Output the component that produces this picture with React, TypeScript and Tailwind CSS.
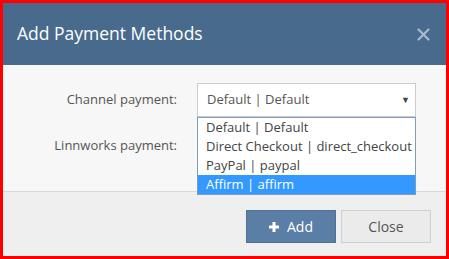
import React from 'react';

const options = [
  { label: 'Default | Default', active: false },
  { label: 'Direct Checkout | direct_checkout', active: false },
  { label: 'PayPal | paypal', active: false },
  { label: 'Affirm | affirm', active: true },
];

const App: React.FC = () => {
  return (
    <div
      className="relative w-[449px] h-[259px] border-[3px] border-[#f00] bg-[#f7f7f7] flex flex-col overflow-hidden"
      style={{ fontFamily: '"Open Sans", "Noto Sans", sans-serif' }}
    >
      {/* Header */}
      <div className="h-[62px] shrink-0 bg-[#476a8d] flex items-center justify-between pl-[14px] pr-[16px]">
        <h1 className="text-[17.5px] text-white leading-none">Add Payment Methods</h1>
        <svg width="13" height="13" viewBox="0 0 13 13" className="text-[#a9bbcd]">
          <path d="M1.5 1.5 L11.5 11.5 M11.5 1.5 L1.5 11.5" stroke="currentColor" strokeWidth="2.2" strokeLinecap="round" />
        </svg>
      </div>

      {/* Body */}
      <div className="h-[126px] shrink-0 bg-[#f7f7f7] pt-[18px] flex flex-col gap-[19px]">
        <div className="flex items-center">
          <label className="w-[174px] text-right text-[13px] text-[#555]">Channel payment:</label>
          <div className="ml-[20px] w-[219px] h-[34px] border border-[#ccc] bg-white flex items-center justify-between pl-[9px] pr-[5px]">
            <span className="text-[13px] text-[#555]">Default | Default</span>
            <span className="text-[9px] text-[#444]">▼</span>
          </div>
        </div>
        <div className="flex items-center">
          <label className="w-[174px] text-right text-[13px] text-[#555]">Linnworks payment:</label>
        </div>
      </div>

      {/* Footer */}
      <div className="flex-1 bg-[#efefef] border-t border-[#d9d9d9] flex items-start justify-end gap-[5px] pt-[18px] pr-[15px]">
        <button className="w-[90px] h-[33px] bg-[#5a7ea5] border border-[#4f7297] text-white text-[14px] flex items-center justify-center gap-[8px]">
          <svg width="10" height="10" viewBox="0 0 10 10">
            <rect x="3.5" y="0" width="3" height="10" fill="white" />
            <rect x="0" y="3.5" width="10" height="3" fill="white" />
          </svg>
          Add
        </button>
        <button className="w-[90px] h-[33px] bg-[#ebebeb] border border-[#cfcfcf] text-[#555] text-[14px]">
          Close
        </button>
      </div>

      {/* Open select list */}
      <div className="absolute left-[194px] top-[114px] w-[219px] bg-white border border-[#7f9db9]">
        {options.map((o) => (
          <div
            key={o.label}
            className={`h-[19px] pl-[8px] text-[13px] leading-[19px] whitespace-nowrap ${
              o.active ? 'bg-[#3399ff] text-white' : 'text-[#444]'
            }`}
          >
            {o.label}
          </div>
        ))}
      </div>
    </div>
  );
};

export default App;
